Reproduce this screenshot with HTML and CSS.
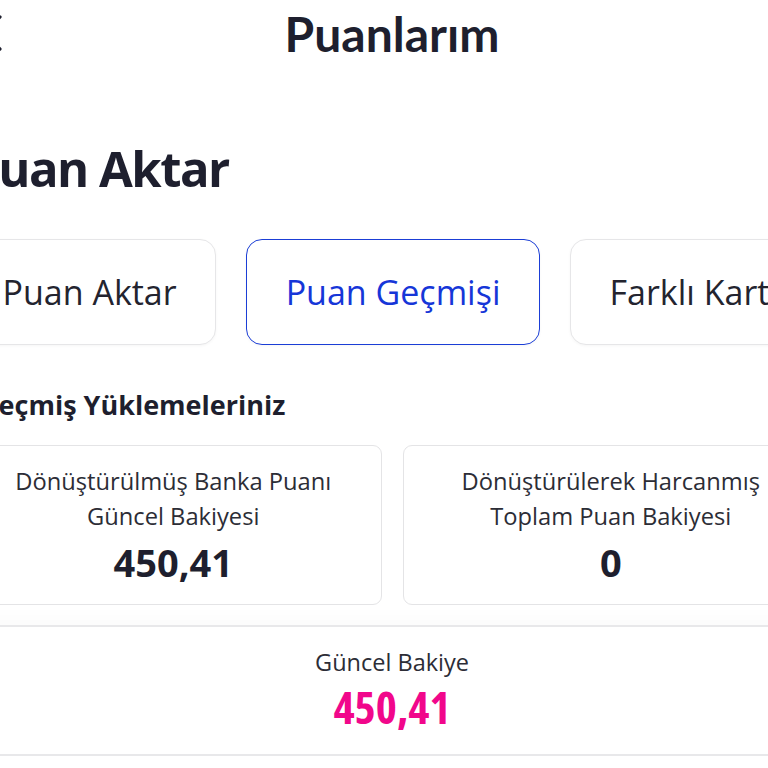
FILE: index.html
```html
<!DOCTYPE html>
<html lang="tr">
<head>
<meta charset="utf-8">
<title>Puanlarım</title>
<link rel="stylesheet" href="styles.css">
</head>
<body>
<div class="page">
  <header class="topbar">
    <a class="back" href="#" aria-label="Geri">
      <svg width="20" height="36" viewBox="0 0 20 36" fill="none" stroke="#1e1f2e" stroke-width="3.2" stroke-linecap="round" stroke-linejoin="round"><path d="M18 2 L3 18 L18 34"/></svg>
    </a>
    <h1 class="title">Puanlarım</h1>
    <span></span>
  </header>

  <h2 class="page-heading">Puan Aktar</h2>

  <nav class="tabs">
    <button class="tab">Puan Aktar</button>
    <button class="tab active">Puan Geçmişi</button>
    <button class="tab">Farklı Kart</button>
  </nav>

  <h3 class="section-heading">Geçmiş Yüklemeleriniz</h3>

  <div class="stats">
    <div class="stat">
      <p class="stat-label">Dönüştürülmüş Banka Puanı<br>Güncel Bakiyesi</p>
      <p class="stat-value">450,41</p>
    </div>
    <div class="stat">
      <p class="stat-label">Dönüştürülerek Harcanmış<br>Toplam Puan Bakiyesi</p>
      <p class="stat-value">0</p>
    </div>
  </div>

  <div class="balance">
    <p class="balance-label">Güncel Bakiye</p>
    <p class="balance-value">450,41</p>
  </div>
</div>
</body>
</html>
```
FILE: styles.css
```css
html, body {
  margin: 0;
  background: #ffffff;
  overflow: hidden;
}

body {
  font-family: "Open Sans", "Liberation Sans", sans-serif;
  color: #1e1f2e;
}

.page {
  width: 854px;
  margin-left: -35px;
}

p, h1, h2, h3 { margin: 0; }

/* top bar */
.topbar {
  display: grid;
  grid-template-columns: 80px 1fr 80px;
  align-items: center;
  height: 68px;
}

.back {
  display: flex;
  margin-left: 17px;
  margin-top: -2px;
}

.title {
  font-family: Lato, "Open Sans", sans-serif;
  font-weight: 700;
  font-size: 48px;
  line-height: 1;
  text-align: center;
  color: #1e1f2e;
}

/* page heading */
.page-heading {
  font-size: 49px;
  font-weight: 700;
  letter-spacing: -1.5px;
  line-height: 1;
  margin-top: 76px;
  margin-left: 4px;
}

/* tabs, sized to their labels and running past the right edge */
.tabs {
  display: flex;
  gap: 30px;
  margin-top: 46px;
  margin-left: -2px;
}

.tab {
  flex: 0 0 auto;
  height: 106px;
  box-sizing: border-box;
  padding: 0 38.5px;
  background: #fff;
  border: 1.5px solid #e6e6e8;
  border-radius: 16px;
  box-shadow: 0 1px 3px rgba(0, 0, 0, 0.04);
  font-family: "Open Sans", sans-serif;
  font-size: 34px;
  font-weight: 500;
  color: #23242f;
  white-space: nowrap;
}

.tab.active {
  border: 1.8px solid #1b3ed6;
  color: #1636d8;
}

/* history */
.section-heading {
  font-size: 27px;
  font-weight: 700;
  line-height: 1;
  margin-top: 46px;
  margin-left: 14px;
}

.stats {
  display: grid;
  grid-template-columns: 1fr 1fr;
  gap: 21px;
  margin-top: 27px;
}

.stat {
  height: 160px;
  box-sizing: border-box;
  border: 1.5px solid #e4e4e6;
  border-radius: 9px;
  text-align: center;
  padding-top: 18px;
}

.stat-label {
  font-size: 23.7px;
  line-height: 35px;
  color: #2c2d36;
}

.stat-value {
  font-size: 38px;
  font-weight: 700;
  line-height: 46px;
  margin-top: 5px;
}

/* current balance */
.balance {
  margin-top: 20px;
  height: 131px;
  box-sizing: border-box;
  border-top: 2px solid #e8e8ea;
  border-bottom: 2px solid #e8e8ea;
  box-shadow: 0 -10px 14px rgba(0, 0, 0, 0.015);
  text-align: center;
  padding-top: 20px;
}

.balance-label {
  font-size: 23.5px;
  line-height: 30px;
  color: #2c2d36;
}

.balance-value {
  font-size: 45px;
  font-weight: 700;
  line-height: 54px;
  margin-top: 3px;
  color: #f1078b;
  font-stretch: 80%;
}
```
